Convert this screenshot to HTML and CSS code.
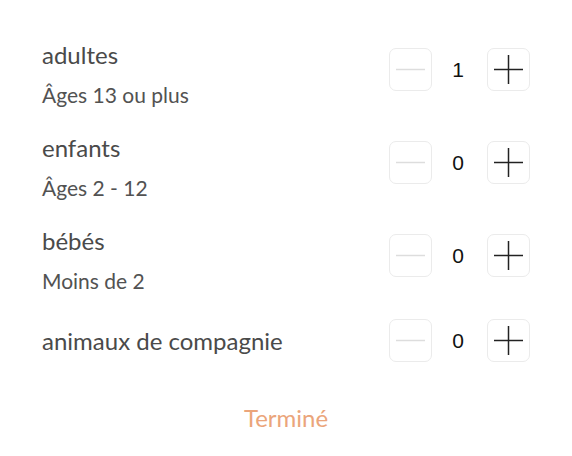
FILE: index.html
```html
<!DOCTYPE html>
<html lang="fr">
<head>
<meta charset="utf-8">
<link rel="stylesheet" href="styles.css">
</head>
<body>
<div class="panel">
  <div class="row">
    <div class="label">
      <div class="title">adultes</div>
      <div class="sub">Âges 13 ou plus</div>
    </div>
    <div class="stepper">
      <button class="btn minus" aria-label="moins"><svg width="29" height="29" viewBox="0 0 29 29"><line x1="0" y1="14.5" x2="29" y2="14.5" stroke="#dddddd" stroke-width="1.5"/></svg></button>
      <span class="count">1</span>
      <button class="btn plus" aria-label="plus"><svg width="29" height="29" viewBox="0 0 29 29"><line x1="0" y1="14.5" x2="29" y2="14.5" stroke="#222" stroke-width="1.5"/><line x1="14.5" y1="0" x2="14.5" y2="29" stroke="#222" stroke-width="1.5"/></svg></button>
    </div>
  </div>
  <div class="row">
    <div class="label">
      <div class="title">enfants</div>
      <div class="sub">Âges 2 - 12</div>
    </div>
    <div class="stepper">
      <button class="btn minus" aria-label="moins"><svg width="29" height="29" viewBox="0 0 29 29"><line x1="0" y1="14.5" x2="29" y2="14.5" stroke="#dddddd" stroke-width="1.5"/></svg></button>
      <span class="count">0</span>
      <button class="btn plus" aria-label="plus"><svg width="29" height="29" viewBox="0 0 29 29"><line x1="0" y1="14.5" x2="29" y2="14.5" stroke="#222" stroke-width="1.5"/><line x1="14.5" y1="0" x2="14.5" y2="29" stroke="#222" stroke-width="1.5"/></svg></button>
    </div>
  </div>
  <div class="row">
    <div class="label">
      <div class="title">bébés</div>
      <div class="sub">Moins de 2</div>
    </div>
    <div class="stepper">
      <button class="btn minus" aria-label="moins"><svg width="29" height="29" viewBox="0 0 29 29"><line x1="0" y1="14.5" x2="29" y2="14.5" stroke="#dddddd" stroke-width="1.5"/></svg></button>
      <span class="count">0</span>
      <button class="btn plus" aria-label="plus"><svg width="29" height="29" viewBox="0 0 29 29"><line x1="0" y1="14.5" x2="29" y2="14.5" stroke="#222" stroke-width="1.5"/><line x1="14.5" y1="0" x2="14.5" y2="29" stroke="#222" stroke-width="1.5"/></svg></button>
    </div>
  </div>
  <div class="row single">
    <div class="label">
      <div class="title">animaux de compagnie</div>
    </div>
    <div class="stepper">
      <button class="btn minus" aria-label="moins"><svg width="29" height="29" viewBox="0 0 29 29"><line x1="0" y1="14.5" x2="29" y2="14.5" stroke="#dddddd" stroke-width="1.5"/></svg></button>
      <span class="count">0</span>
      <button class="btn plus" aria-label="plus"><svg width="29" height="29" viewBox="0 0 29 29"><line x1="0" y1="14.5" x2="29" y2="14.5" stroke="#222" stroke-width="1.5"/><line x1="14.5" y1="0" x2="14.5" y2="29" stroke="#222" stroke-width="1.5"/></svg></button>
    </div>
  </div>
  <div class="footer">
    <button class="done">Terminé</button>
  </div>
</div>
</body>
</html>
```

FILE: styles.css
```css
html, body {
  margin: 0;
  padding: 0;
  background: #ffffff;
}
body {
  font-family: Lato, "Open Sans", sans-serif;
  color: #4a4a4a;
}
.panel {
  width: 572px;
  height: 456px;
  box-sizing: border-box;
  padding: 23px 42px 0 42px;
  display: flex;
  flex-direction: column;
}
.row {
  height: 93px;
  flex: none;
  display: flex;
  align-items: center;
  justify-content: space-between;
}
.row.single {
  height: 77px;
}
.label {
  display: flex;
  flex-direction: column;
  gap: 14px;
  padding-top: 8px;
}
.row.single .label {
  padding-top: 0;
}
.title {
  font-size: 24px;
  line-height: 28px;
  color: #4a4a4a;
}
.sub {
  font-size: 21px;
  line-height: 24px;
  color: #525252;
}
.stepper {
  display: flex;
  align-items: center;
}
.btn {
  width: 43px;
  height: 43px;
  box-sizing: border-box;
  border: 1px solid #ebebeb;
  border-radius: 7px;
  background: #ffffff;
  padding: 0;
  display: flex;
  align-items: center;
  justify-content: center;
}
.btn svg {
  display: block;
}
.count {
  width: 55px;
  box-sizing: border-box;
  padding-right: 3px;
  text-align: center;
  font-family: "Liberation Sans", Arial, sans-serif;
  font-size: 21px;
  color: #111111;
}
.footer {
  display: flex;
  justify-content: center;
  padding-top: 25px;
}
.done {
  border: none;
  background: none;
  padding: 0;
  font-family: Lato, "Open Sans", sans-serif;
  font-size: 24px;
  line-height: 28px;
  color: #eba57b;
}
```
